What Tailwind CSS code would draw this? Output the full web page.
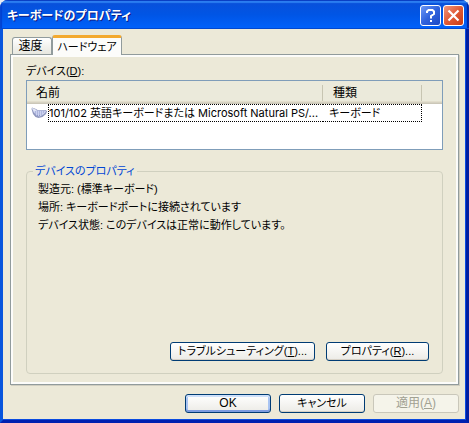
<!doctype html>
<html lang="ja">
<head>
  <meta charset="UTF-8">
  <title>キーボードのプロパティ</title>
  <meta name="viewport" content="width=device-width, initial-scale=1.0">
  <script src="https://cdn.jsdelivr.net/npm/@tailwindcss/browser@4"></script>
</head>

<body class="bg-[#e8ecf4] text-black text-[12px] leading-[18px] font-['Liberation_Sans','Noto_Sans_CJK_JP',sans-serif] [font-feature-settings:'palt']">

  <div class="flex min-h-screen flex-col overflow-hidden rounded-t-lg bg-[#ece9d8]">

    <!-- title bar -->
    <header class="flex h-[29px] shrink-0 items-center gap-[2px] bg-linear-to-b from-[#0a4fd8] via-[#0055e5] to-[#0062fc] pt-[2px] pr-[5px] pl-[7px] shadow-[inset_0_1px_0_#0a3fc4,inset_0_3px_1px_#2b7df0,inset_0_-1px_0_#0048d0,inset_2px_0_1px_#0040d0,inset_-2px_0_1px_#0020a0]">
      <h1 class="flex-1 truncate text-[12px] font-bold text-white text-shadow-[1px_1px_0_#0a1883]">キーボードのプロパティ</h1>
      <button type="button" aria-label="ヘルプ" class="flex size-[21px] items-center justify-center rounded-[3px] border border-white bg-linear-to-br from-[#6d97f5] via-[#2f62dd] to-[#1c49c4]">
        <svg class="size-[15px]" viewBox="0 0 15 15" fill="none" stroke="#fff" stroke-width="2"><path d="M4 5V3.500L5.500 2h4L11 3.500V6L8 8v2.500M8 12v2"/></svg>
      </button>
      <button type="button" aria-label="閉じる" class="flex size-[21px] items-center justify-center rounded-[3px] border border-white bg-linear-to-br from-[#f0957c] via-[#e05a35] to-[#c93a10]">
        <svg class="size-[15px]" viewBox="0 0 15 15" fill="none" stroke="#fff" stroke-width="2.200"><path d="M2.500 2.500l10 10M12.500 2.500l-10 10"/></svg>
      </button>
    </header>

    <div class="flex flex-1 flex-col border-x-[3px] border-b-[3px] border-t-0 border-l-[#0855dd] border-r-[#001ea0] border-b-[#0020b0] px-[7px] pt-[6px] pb-[7px] shadow-[inset_-1px_-1px_0_#0a4be0]">

      <!-- tabs -->
      <div role="tablist" class="flex items-end pl-[2px]">
        <button type="button" role="tab" aria-selected="false" class="h-[17px] w-[40px] rounded-t-[3px] border border-b-0 border-[#919b9c] bg-linear-to-b from-white to-[#e8e8e0] pr-[3px] leading-[17px] whitespace-nowrap">速度</button>
        <button type="button" role="tab" aria-selected="true" class="relative z-10 -mb-px h-[20px] w-[70px] overflow-hidden rounded-t-[3px] border border-t-[3px] border-b-0 border-[#919b9c] border-t-[#f3a92e] bg-[#fcfcfa] text-[11px] leading-[16px] whitespace-nowrap">ハードウェア</button>
      </div>

      <!-- hardware page -->
      <main role="tabpanel" class="flex flex-1 flex-col border border-[#919b9c] px-[15px] pt-[7px] pb-[10px] shadow-[inset_0_0_0_2px_#fcfcfa,1px_1px_0_#d0cec0]">
        <h2 id="devices" class="text-[11px]">デバイス(<u>D</u>):</h2>

        <div class="h-[70px] shrink-0 border border-[#7f9db9] bg-white">
          <table aria-labelledby="devices" class="w-full table-fixed border-collapse text-left">
            <colgroup>
              <col>
              <col class="w-[99px]">
              <col class="w-[20px]">
            </colgroup>
            <thead class="bg-[#ebeadb] shadow-[inset_0_-1px_0_#cbc7b8,inset_0_-2px_0_#d6d2c2,inset_0_-3px_0_#e2decd]">
              <tr class="h-[23px]">
                <th scope="col" class="p-0 font-normal"><div class="border-r border-[#c7c5b2] pl-[9px] leading-[16px]">名前</div></th>
                <th scope="col" class="p-0 font-normal"><div class="border-r border-[#c7c5b2] pl-[10px] leading-[16px]">種類</div></th>
                <td class="p-0"></td>
              </tr>
            </thead>
            <tbody>
              <tr>
                <td class="p-0">
                  <div class="flex items-center gap-[1px] pl-[4px]">
                    <svg class="size-[16px] shrink-0" viewBox="0 0 16 16">
                      <path d="M1 2.500L5 4l1.500 1h8.500l1 1.500-1 2.500-3.500 3-4 1-3-1L2 9 .5 4z" fill="#8f97bd"/>
                      <path d="M1 3l3.500 1.500L6 5.500h8.500l.5 1-2 2.500-4 2.500-3-.5L2.500 7z" fill="#ccd2ef"/>
                      <path d="M1 3l3.500 1.500 1 1-2 1L2 5z" fill="#e4e7f5"/>
                      <path d="M4 7h10M4 9h8M6 10.500h4" stroke="#8f99cc" stroke-dasharray="1 1"/>
                    </svg>
                    <span class="min-w-0 flex-1 truncate border-y border-l border-dotted border-black font-['Inter','Noto_Sans_CJK_JP',sans-serif] text-[11px] leading-[16px]">101/102 英語キーボードまたは Microsoft Natural PS/...</span>
                  </div>
                </td>
                <td class="p-0"><div class="border-y border-r border-dotted border-black pl-[6px] text-[11px] leading-[16px]">キーボード</div></td>
                <td class="p-0"></td>
              </tr>
            </tbody>
          </table>
        </div>

        <fieldset class="mt-[12px] flex-1 rounded-[4px] border border-[#d0d0bf] px-[11px] pb-[11px] text-[11px]">
          <legend class="-ml-[5px] px-[2px] text-[#0046d5]">デバイスのプロパティ</legend>
          <div class="min-h-[162px]">
            <p>製造元: (標準キーボード)</p>
            <p>場所: キーボードポートに接続されています</p>
            <p>デバイス状態: このデバイスは正常に動作しています。</p>
          </div>
          <div class="flex justify-end gap-[11px] pr-[2px]">
            <button type="button" class="h-[19px] w-[145px] rounded-[3px] border border-[#003c74] bg-linear-to-b from-white to-[#ecebe6] leading-[17px] shadow-[inset_0_-1px_0_#d6d0c5]">トラブルシューティング(<u>T</u>)...</button>
            <button type="button" class="h-[19px] w-[103px] rounded-[3px] border border-[#003c74] bg-linear-to-b from-white to-[#ecebe6] leading-[17px] shadow-[inset_0_-1px_0_#d6d0c5]">プロパティ(<u>R</u>)...</button>
          </div>
        </fieldset>
      </main>

      <!-- dialog buttons -->
      <footer class="mt-[9px] flex justify-end gap-[8px]">
        <button type="button" class="h-[19px] w-[86px] rounded-[3px] border border-[#003c74] bg-linear-to-b from-white to-[#ecebe6] leading-[17px] shadow-[inset_0_2px_0_#cee0fa,inset_0_-2px_0_#7d9ce0,inset_2px_0_0_#a9c4f2,inset_-2px_0_0_#a9c4f2]">OK</button>
        <button type="button" class="h-[19px] w-[86px] rounded-[3px] border border-[#003c74] bg-linear-to-b from-white to-[#ecebe6] text-[11px] leading-[17px] shadow-[inset_0_-1px_0_#d6d0c5]">キャンセル</button>
        <button type="button" disabled class="h-[19px] w-[86px] rounded-[3px] border border-[#c9c7ba] bg-[#f5f4ea] leading-[17px] text-[#a1a192]">適用(<u>A</u>)</button>
      </footer>
    </div>
  </div>

</body>
</html>
